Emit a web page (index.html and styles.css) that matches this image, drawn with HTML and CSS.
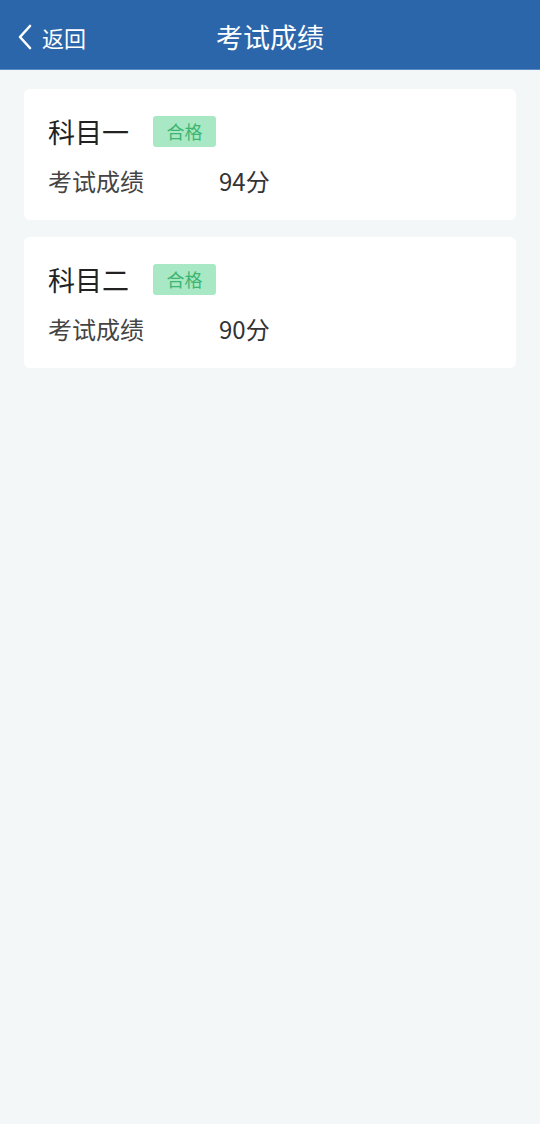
FILE: index.html
```html
<!DOCTYPE html>
<html lang="zh-CN">
<head>
  <meta charset="UTF-8">
  <meta name="viewport" content="width=device-width, initial-scale=1.0">
  <title>考试成绩</title>
  <link rel="stylesheet" href="styles.css">
</head>
<body>
  <header class="topbar">
    <a class="back" href="#">
      <svg class="back-icon" width="16" height="26" viewBox="0 0 16 26">
        <path d="M13 2 L3 13 L13 24" fill="none" stroke="#fff" stroke-width="2.6" stroke-linecap="round" stroke-linejoin="round"/>
      </svg>
      <span>返回</span>
    </a>
    <h1>考试成绩</h1>
  </header>

  <main class="list">
    <section class="card">
      <div class="card-head">
        <span class="subject">科目一</span>
        <span class="badge">合格</span>
      </div>
      <div class="card-row">
        <span class="label">考试成绩</span>
        <span class="value">94分</span>
      </div>
    </section>

    <section class="card">
      <div class="card-head">
        <span class="subject">科目二</span>
        <span class="badge">合格</span>
      </div>
      <div class="card-row">
        <span class="label">考试成绩</span>
        <span class="value">90分</span>
      </div>
    </section>
  </main>
</body>
</html>
```

FILE: styles.css
```css
body {
  margin: 0;
  min-height: 1124px;
  font-family: "Noto Sans CJK SC", "Noto Sans", sans-serif;
  background-color: #f4f7f8;
  color: #333;
}
.topbar {
  position: relative;
  height: 70px;
  padding-top: 4px;
  background-color: #2c66aa;
  display: flex;
  align-items: center;
  justify-content: center;
  border-bottom: 1px solid #5a8cc4;
  box-sizing: border-box;
}
.topbar h1 {
  margin: 0;
  font-size: 27px;
  font-weight: 400;
  color: #fff;
}
/* 返回按钮 */
.back {
  position: absolute;
  left: 17px;
  top: 4px;
  height: 66px;
  display: flex;
  align-items: center;
  gap: 9px;
  color: #fff;
  text-decoration: none;
  font-size: 22px;
}
.back-icon {
  display: block;
}
.list {
  padding: 19px 24px;
  display: flex;
  flex-direction: column;
  gap: 17px;
}
.card {
  background-color: #fff;
  border-radius: 6px;
  height: 131px;
  box-sizing: border-box;
  padding: 26px 24px 0;
}
.card-head {
  display: flex;
  align-items: center;
  gap: 24px;
  height: 32px;
}
.subject {
  font-size: 27px;
  font-weight: 400;
  color: #222;
}
.badge {
  display: inline-block;
  width: 63px;
  height: 31px;
  line-height: 31px;
  text-align: center;
  border-radius: 3px;
  background-color: #a9e8c5;
  color: #3cb670;
  font-size: 18px;
}
.card-row {
  display: flex;
  align-items: center;
  margin-top: 16px;
  font-size: 24px;
  color: #444;
}
.label {
  width: 171px;
}
.value {
  color: #333;
}
```
